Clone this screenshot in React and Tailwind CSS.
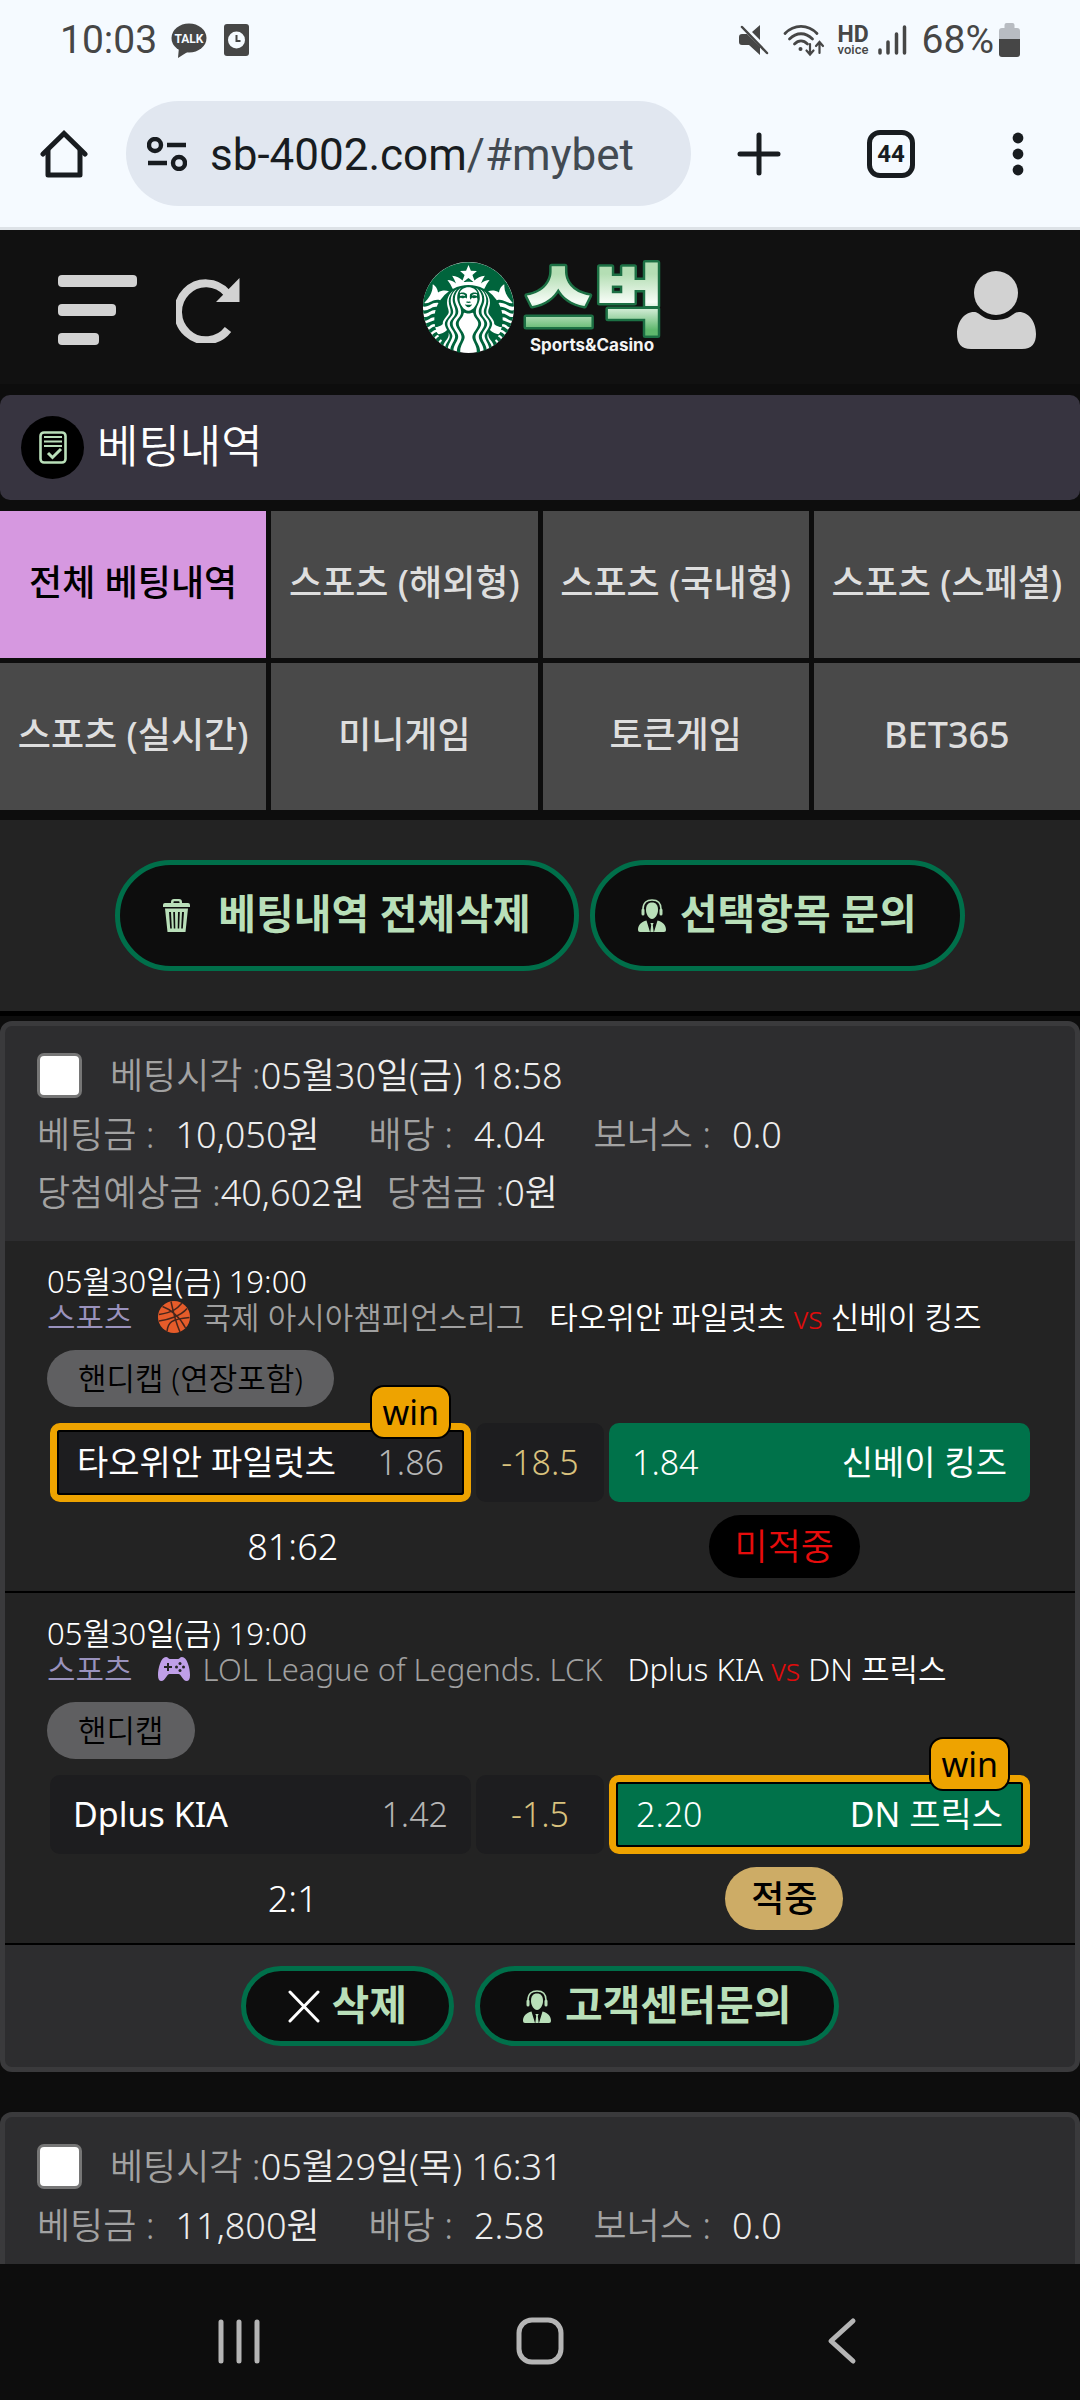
import { SiStarbucks } from "react-icons/si";

const kr = "font-['Noto_Sans','Noto_Sans_CJK_KR',sans-serif]";

function TrashIcon() {
  return (
    <svg className="h-[33px] w-[27px] shrink-0" viewBox="0 0 27 33" fill="currentColor" aria-hidden="true">
      <path d="M8 4V3a3 3 0 0 1 3-3h5a3 3 0 0 1 3 3v1h6a2 2 0 0 1 2 2v2H0V6a2 2 0 0 1 2-2zM10.500 4h6V3a.8.8 0 0 0-.8-.8h-4.400a.8.8 0 0 0-.8.8z" />
      <path fillRule="evenodd" d="M2 9.500h23L22.500 33h-18zM6 13l1.200 16.500h1.600L8 13zM10.200 13l.6 16.500h1.500L12 13zM15 13l-.3 16.500h1.500l.6-16.500zM19 13l-.8 16.500h1.600L21 13z" />
    </svg>
  );
}

function AgentIcon() {
  return (
    <svg className="h-[33px] w-[28px] shrink-0" viewBox="0 0 28 33" fill="currentColor" aria-hidden="true">
      <path d="M14 3.500c4 0 6 2.500 6 7.500 0 4.500-3 9-6 9s-6-4.500-6-9c0-5 2-7.500 6-7.500z" />
      <path d="M5 10C5 3.500 9 .9 14 .9s9 2.600 9 9.100" fill="none" stroke="currentColor" strokeWidth="1.500" />
      <rect x="3.500" y="9.500" width="3" height="7" rx="1.500" />
      <rect x="21.500" y="9.500" width="3" height="7" rx="1.500" />
      <path d="M8.500 21.500 12 33H2a2 2 0 0 1-2-2c0-5.500 3.500-8 8.500-9.500zM19.500 21.500 16 33h10a2 2 0 0 0 2-2c0-5.500-3.500-8-8.500-9.500z" />
      <path d="M12.400 24h3.200l-.8 2 .9 7h-3.400l.9-7z" />
    </svg>
  );
}

function CloseIcon() {
  return (
    <svg className="h-[33px] w-[32px] shrink-0" viewBox="0 0 32 33" stroke="#fff" strokeWidth="3" strokeLinecap="round" aria-hidden="true">
      <path d="M2 2l28 29M30 2L2 31" />
    </svg>
  );
}

function BasketballIcon() {
  return (
    <svg className="h-[32px] w-[32px] shrink-0" viewBox="0 0 32 32" fill="none" stroke="#46261c" strokeWidth="1.500" aria-hidden="true">
      <circle cx="16" cy="16" r="16" fill="#e65c2a" stroke="none" />
      <path d="M13 .5C15 10 18 22 22 31M1 20c8-1 22-5 28-12.500M4.500 5.500C12 8 22 16 27.500 27M24 2c-5 6-9 9-23 11.500M9 30.500c1-9 4-12.500 22.500-14" />
    </svg>
  );
}

function GamepadIcon() {
  return (
    <svg className="h-[24px] w-[32px] shrink-0" viewBox="0 0 32 24" aria-hidden="true">
      <path fill="#bf9fe8" d="M8 0c2 0 2.500 2 4 2h8c1.500 0 2-2 4-2 5 0 8 11 8 18 0 4-1 6-3.500 6C25 24 23 17 20.500 17h-9C9 17 7 24 3.500 24 1 24 0 22 0 18 0 11 3 0 8 0z" />
      <path stroke="#232323" strokeWidth="2" d="M10 6v8M6 10h8" />
      <g fill="#232323">
        <circle cx="22" cy="6.500" r="1.500" />
        <circle cx="25.500" cy="10" r="1.500" />
        <circle cx="22" cy="13.500" r="1.500" />
        <circle cx="18.500" cy="10" r="1.500" />
      </g>
    </svg>
  );
}

function StatusBar() {
  return (
    <div className="flex h-[80px] items-center px-[60px] font-['Roboto',sans-serif] text-[39px] text-[#464646]">
      <span>10:03</span>
      <svg className="ml-[14px] h-[35px] w-[36px]" viewBox="0 0 36 35" aria-label="TALK">
        <ellipse cx="18" cy="15" rx="17.500" ry="14.500" fill="#464646" />
        <path d="M8 24 7 35l11-7z" fill="#464646" />
        <text x="18" y="20" textAnchor="middle" fontSize="12" fontWeight="700" fill="#f5faff" fontFamily="Roboto, sans-serif">TALK</text>
      </svg>
      <svg className="ml-[17px] h-[32px] w-[25px]" viewBox="0 0 25 32" aria-hidden="true">
        <rect width="25" height="32" rx="3" fill="#464646" />
        <circle cx="12.500" cy="16" r="8.500" fill="#f5faff" />
        <path d="M12.500 11v6h4" fill="none" stroke="#464646" strokeWidth="2" />
      </svg>
      <div className="ml-auto flex items-center">
        <svg className="h-[32px] w-[30px]" viewBox="0 0 30 32" aria-hidden="true">
          <path fill="#464646" d="M3 10h5l13 13v8L10 21H3a3 3 0 0 1-3-3v-5a3 3 0 0 1 3-3zM21 1v15l-8-8z" />
          <path d="M3 3l25 26" stroke="#464646" strokeWidth="2.500" strokeLinecap="round" />
        </svg>
        <svg className="ml-[14px] h-[33px] w-[42px]" viewBox="0 0 42 33" fill="none" stroke="#464646" strokeWidth="2.800" strokeLinecap="round" aria-hidden="true">
          <path d="M2 9.500c9-9.500 23-9.500 32 0M6.500 15c7-7 16-7 23 0M11.500 20c4-4 9-4 13 0" />
          <circle cx="17.500" cy="25" r="2" fill="#464646" stroke="none" />
          <path strokeWidth="2.200" d="M27 20v10m-3.500-3.500L27 30.500l3.500-4M36.500 29V18m-3.500 4 3.500-4 3.500 4" />
        </svg>
        <span className="ml-[12px] flex flex-col items-center font-bold">
          <span className="text-[23px] leading-[18px]">HD</span>
          <span className="text-[13px] font-medium leading-[11px]">voice</span>
        </span>
        <svg className="ml-[9px] h-[32px] w-[29px]" viewBox="0 0 29 32" stroke="#464646" strokeWidth="3.500" strokeLinecap="round" aria-hidden="true">
          <path d="M2 26v3M10 18v11M18.500 10v19M26.500 3v26" />
        </svg>
        <span className="ml-[15px]">68%</span>
        <svg className="ml-[5px] h-[34px] w-[21px]" viewBox="0 0 21 34" aria-hidden="true">
          <path fill="#b8bcc2" d="M5.500 2a2 2 0 0 1 2-2h6a2 2 0 0 1 2 2v3H18a3 3 0 0 1 3 3v8H0V8a3 3 0 0 1 3-3h2.500z" />
          <path fill="#464646" d="M0 16h21v15a3 3 0 0 1-3 3H3a3 3 0 0 1-3-3z" />
        </svg>
      </div>
    </div>
  );
}

function BrowserBar() {
  return (
    <div className="flex items-center border-b-[3px] border-[#dde2e7] pb-[21px] pl-[40px] pr-[56px] pt-[21px] text-[#181c20]">
      <button type="button" aria-label="Home">
        <svg className="h-[48px] w-[48px]" viewBox="0 0 48 48" fill="none" stroke="currentColor" strokeWidth="5" aria-hidden="true">
          <path strokeLinecap="round" d="M3 24 24 3.500 45 24" />
          <path strokeLinejoin="round" d="M8 20v25h32V20" />
        </svg>
      </button>
      <button type="button" className="ml-[38px] flex h-[105px] min-w-0 flex-1 items-center rounded-full bg-[#e1e7f0] pl-[21px] font-['Roboto',sans-serif] text-[44px]">
        <svg className="h-[34px] w-[40px] shrink-0" viewBox="0 0 40 34" fill="none" stroke="currentColor" strokeWidth="4.400" aria-hidden="true">
          <circle cx="8" cy="8" r="6" />
          <path d="M20 8h19M1 26h19" />
          <circle cx="32" cy="26" r="6" />
        </svg>
        <span className="ml-[23px] whitespace-nowrap pt-[2px]">
          sb-4002.com<span className="text-[#424a52]">/#mybet</span>
        </span>
      </button>
      <button type="button" aria-label="New tab" className="ml-[46px]">
        <svg className="h-[44px] w-[44px]" viewBox="0 0 44 44" stroke="currentColor" strokeWidth="5" strokeLinecap="round" aria-hidden="true">
          <path d="M22 3v38M3 22h38" />
        </svg>
      </button>
      <button type="button" aria-label="Tabs" className="ml-[86px] flex h-[48px] w-[48px] items-center justify-center rounded-[13px] border-[5px] border-[#181c20] font-['Roboto',sans-serif] text-[24px] font-bold">
        44
      </button>
      <button type="button" aria-label="More" className="ml-[97px]">
        <svg className="h-[44px] w-[12px]" viewBox="0 0 12 44" fill="currentColor" aria-hidden="true">
          <circle cx="6" cy="6" r="5.400" />
          <circle cx="6" cy="22" r="5.400" />
          <circle cx="6" cy="38" r="5.400" />
        </svg>
      </button>
    </div>
  );
}

function SiteHeader() {
  return (
    <header className="flex h-[154px] items-center justify-between bg-[#111] pl-[57px] pr-[44px] text-[#d2d2d2]">
      <div className="flex flex-1 items-center gap-[39px] pt-[6px]">
        <button type="button" aria-label="메뉴">
          <svg className="h-[72px] w-[80px]" viewBox="0 0 80 72" fill="currentColor" aria-hidden="true">
            <rect x="1" y="1" width="79" height="12" rx="4" />
            <rect x="1" y="30" width="58" height="12" rx="4" />
            <rect x="1" y="59" width="41" height="12" rx="4" />
          </svg>
        </button>
        <button type="button" aria-label="새로고침">
          <svg className="h-[66px] w-[64px]" viewBox="0 0 64 66" aria-hidden="true">
            <path d="M52 52.500A28 28.500 0 1 1 51 16" fill="none" stroke="currentColor" strokeWidth="8" />
            <path d="M63.500 1v24H40z" fill="currentColor" />
          </svg>
        </button>
      </div>
      <a href="#home" className="flex items-center" aria-label="스벅 Sports&Casino">
        <span className="flex h-[91px] w-[91px] items-center justify-center rounded-full bg-white">
          <SiStarbucks className="h-[91px] w-[91px] text-[#00643c]" aria-hidden="true" />
        </span>
        <svg className="ml-[7px] h-[100px] w-[150px] overflow-visible" viewBox="0 0 150 100">
          <defs>
            <linearGradient id="logoFill" gradientUnits="userSpaceOnUse" x1="0" y1="10" x2="0" y2="80">
              <stop offset="0.100" stopColor="#b4deb4" />
              <stop offset="0.500" stopColor="#f6fcf6" />
              <stop offset="0.900" stopColor="#5fb86d" />
            </linearGradient>
          </defs>
          <text x="73" y="71" textAnchor="middle" fontSize="77" fontWeight="900" fontFamily="'Noto Sans CJK KR', sans-serif" fill="url(#logoFill)" stroke="#1c7044" strokeWidth="5" strokeLinejoin="round" paintOrder="stroke">스벅</text>
          <text x="71" y="94" textAnchor="middle" fontSize="17" fontWeight="700" fontFamily="Inter, sans-serif" fill="#f4f4f4">Sports&amp;Casino</text>
        </svg>
      </a>
      <div className="flex flex-1 justify-end pt-[6px]">
        <button type="button" aria-label="내 정보">
          <svg className="h-[78px] w-[79px]" viewBox="0 0 79 78" fill="currentColor" aria-hidden="true">
            <circle cx="39" cy="22" r="22" />
            <path d="M0 63c0-12 7-22 17-22 6 0 8 8 22.500 8S56 41 62 41c10 0 17 10 17 22 0 9-4 15-14 15H14C4 78 0 72 0 63z" />
          </svg>
        </button>
      </div>
    </header>
  );
}

const tabs = [
  "전체 베팅내역",
  "스포츠 (해외형)",
  "스포츠 (국내형)",
  "스포츠 (스페셜)",
  "스포츠 (실시간)",
  "미니게임",
  "토큰게임",
  "BET365",
];

function Tabs() {
  return (
    <nav className="grid grid-cols-4 gap-[5px] text-[36px] font-medium text-[#dedede]">
      {tabs.map((t, i) => (
        <button
          key={t}
          type="button"
          className={
            i === 0
              ? "h-[147px] whitespace-nowrap bg-[#d698e0] pb-[3px] text-black"
              : "h-[147px] whitespace-nowrap bg-[#494949] pb-[3px]"
          }
        >
          {t}
        </button>
      ))}
    </nav>
  );
}

const pill =
  "flex items-center whitespace-nowrap rounded-full border-[5px] border-[#006f4a] bg-[#0d0d0d] text-[41px] font-bold text-[#b9dfb9]";

function BetHead({ id, time, stake, odds, bonus, children }) {
  return (
    <div className="px-[32px] pb-[19px] pt-[27px] text-[36px] font-[350] text-[#ededed]">
      <div className="flex h-[45px] items-center">
        <input id={id} type="checkbox" className="h-[45px] w-[45px] appearance-none rounded-[7px] border-[3px] border-[#767676] bg-white" />
        <label htmlFor={id} className="ml-[28px] whitespace-pre leading-[45px]">
          <span className="text-[#a2a2a2]">베팅시각 :</span>
          {time}
        </label>
      </div>
      <div className="mt-[8px] flex gap-[49px] whitespace-nowrap leading-[58px]">
        {[["베팅금", stake], ["배당", odds], ["보너스", bonus]].map(([k, v]) => (
          <span key={k} className="flex gap-[21px]">
            <span className="text-[#a2a2a2]">{k} :</span>
            <span>{v}</span>
          </span>
        ))}
      </div>
      {children}
    </div>
  );
}

function Win() {
  return (
    <span className="absolute -top-[45px] right-[13px] rounded-[14px] border-2 border-black bg-[#eea300] px-[10px] text-[34px] leading-[50px] text-black">
      win
    </span>
  );
}

function Side({ win, green, children }) {
  const base = "relative flex h-[79px] items-center justify-between rounded-[10px] whitespace-nowrap";
  return (
    <button type="button" className={`${base} ${green ? "bg-[#00724a]" : "bg-[#1d1d1f]"} ${win ? "border-[7px] border-[#eea300]" : "px-[23px]"}`}>
      {win ? (
        <span className="flex h-full w-full items-center justify-between rounded-[3px] border-2 border-black px-[18px]">{children}</span>
      ) : (
        children
      )}
      {win && <Win />}
    </button>
  );
}

function Match({ icon, league, home, away, market, homeOdds, line, awayOdds, winner, score, hit }) {
  return (
    <section className="border-b-2 border-black bg-[#232323] pb-[13px] pl-[42px] pr-[45px] pt-[22px] text-white">
      <div className="text-[31px] font-[350] leading-[36px]">05월30일(금) 19:00</div>
      <div className="flex items-center whitespace-nowrap text-[31px] font-[350] leading-[36px]">
        <span className="text-[#9a92bd]">스포츠</span>
        <span className="ml-[24px] flex w-[34px] justify-center">{icon}</span>
        <span className="ml-[12px] text-[#a0a0a0]">{league}</span>
        <span className="ml-[25px]">
          {home} <span className="text-[#e00c0c]">vs</span> {away}
        </span>
      </div>
      <span className="mt-[15px] inline-block rounded-full bg-[#5f5f61] px-[31px] text-[31px] font-[350] leading-[57px] text-black">{market}</span>
      <div className="ml-[3px] mt-[16px] grid grid-cols-[minmax(0,1fr)_128px_minmax(0,1fr)] gap-[5px] text-[34px]">
        <Side win={winner === "home"}>
          <span>{home}</span>
          <span className="font-[350] text-[#b5b5b5]">{homeOdds}</span>
        </Side>
        <div className="flex h-[79px] items-center justify-center rounded-[10px] bg-[#1d1d1f] font-[350] text-[#d9c27e]">{line}</div>
        <Side green win={winner === "away"}>
          <span className="font-[350]">{awayOdds}</span>
          <span>{away}</span>
        </Side>
      </div>
      <div className="mt-[13px] flex h-[63px] items-center text-[36px]">
        <div className="flex-1 text-center font-[350]">{score}</div>
        <div className="flex flex-1 justify-center">
          <span
            className={
              hit
                ? "rounded-full bg-[#cdac66] px-[26px] font-medium leading-[63px] text-black"
                : "rounded-full bg-black px-[26px] font-[350] leading-[63px] text-[#e60c0c]"
            }
          >
            {hit ? "적중" : "미적중"}
          </span>
        </div>
      </div>
    </section>
  );
}

export default function App() {
  return (
    <div className={`flex h-screen flex-col overflow-hidden bg-[#0d0d0d] ${kr}`}>
      <div className="shrink-0 bg-[#f5faff]">
        <StatusBar />
        <BrowserBar />
      </div>
      <main className="min-h-0 flex-1 overflow-y-auto [scrollbar-width:none]">
        <SiteHeader />
        <div className="my-[11px] flex h-[105px] items-center rounded-[10px] bg-[#373440] pl-[21px]">
          <span className="flex h-[63px] w-[63px] items-center justify-center rounded-full bg-black">
            <svg className="h-[33px] w-[28px]" viewBox="0 0 28 33" fill="none" stroke="#b9dfb9" aria-hidden="true">
              <rect x="1.500" y="1.500" width="25" height="30" rx="3.500" strokeWidth="2.600" />
              <path strokeWidth="1.800" d="M5 6h18M5 10.500h18M5 15h18" />
              <path strokeWidth="3" d="m9 22 4.500 4.500L22 18" />
            </svg>
          </span>
          <h1 className="ml-[13px] pb-[3px] text-[45px] font-[350] text-white">베팅내역</h1>
        </div>
        <Tabs />
        <div className="mt-[10px] flex justify-center gap-[11px] border-b-[5px] border-black bg-[#232323] py-[40px]">
          <button type="button" className={`${pill} h-[111px] gap-[28px] px-[43px]`}>
            <TrashIcon /><span className="pb-[3px]">베팅내역 전체삭제</span>
          </button>
          <button type="button" className={`${pill} h-[111px] gap-[14px] px-[43px]`}>
            <AgentIcon /><span className="pb-[3px]">선택항목 문의</span>
          </button>
        </div>

        <article className="mt-[5px] overflow-hidden rounded-[12px] border-[5px] border-[#3a3a3c] bg-[#2d2d2f]">
          <BetHead id="bet-1" time="05월30일(금) 18:58" stake="10,050원" odds="4.04" bonus="0.0">
            <div className="flex gap-[22px] whitespace-nowrap leading-[58px]">
              <span><span className="text-[#a2a2a2]">당첨예상금 :</span>40,602원</span>
              <span><span className="text-[#a2a2a2]">당첨금 :</span>0원</span>
            </div>
          </BetHead>
          <Match
            icon={<BasketballIcon />}
            league="국제 아시아챔피언스리그"
            home="타오위안 파일럿츠"
            away="신베이 킹즈"
            market="핸디캡 (연장포함)"
            homeOdds="1.86"
            line="-18.5"
            awayOdds="1.84"
            winner="home"
            score="81:62"
          />
          <Match
            icon={<GamepadIcon />}
            league="LOL League of Legends. LCK"
            home="Dplus KIA"
            away="DN 프릭스"
            market="핸디캡"
            homeOdds="1.42"
            line="-1.5"
            awayOdds="2.20"
            winner="away"
            score="2:1"
            hit
          />
          <div className="flex justify-center gap-[21px] py-[21px]">
            <button type="button" className={`${pill} h-[80px] gap-[12px] px-[42px]`}>
              <CloseIcon /><span className="pb-[3px]">삭제</span>
            </button>
            <button type="button" className={`${pill} h-[80px] gap-[14px] px-[43px]`}>
              <AgentIcon /><span className="pb-[3px]">고객센터문의</span>
            </button>
          </div>
        </article>

        <article className="mt-[40px] rounded-t-[12px] border-[5px] border-b-0 border-[#3a3a3c] bg-[#2d2d2f]">
          <BetHead id="bet-2" time="05월29일(목) 16:31" stake="11,800원" odds="2.58" bonus="0.0" />
        </article>
      </main>
      <nav className="flex h-[136px] shrink-0 items-center justify-around bg-[#0d0d0d] px-[88px] pt-[17px] text-[#b5b5b5]">
        <button type="button" aria-label="최근 앱" className="p-4">
          <svg className="h-[48px] w-[48px]" viewBox="0 0 48 48" stroke="currentColor" strokeWidth="5" strokeLinecap="round" aria-hidden="true">
            <path d="M6 5v39M24 5v39M42 5v39" />
          </svg>
        </button>
        <button type="button" aria-label="홈" className="p-4">
          <svg className="h-[48px] w-[48px]" viewBox="0 0 48 48" fill="none" stroke="currentColor" strokeWidth="5" aria-hidden="true">
            <rect x="3" y="3" width="42" height="42" rx="13" />
          </svg>
        </button>
        <button type="button" aria-label="뒤로" className="p-4">
          <svg className="h-[48px] w-[48px]" viewBox="0 0 48 48" fill="none" stroke="currentColor" strokeWidth="5" strokeLinecap="round" strokeLinejoin="round" aria-hidden="true">
            <path d="M36 4 14 24l22 20" />
          </svg>
        </button>
      </nav>
    </div>
  );
}
